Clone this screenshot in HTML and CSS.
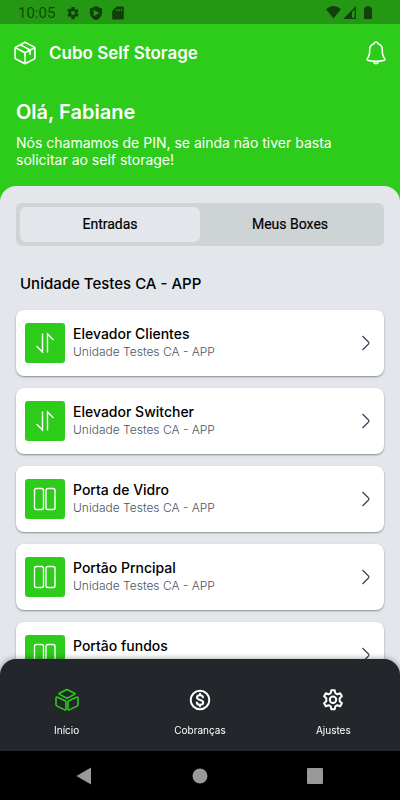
FILE: index.html
```html
<!DOCTYPE html>
<html lang="pt-BR">
<head>
  <meta charset="UTF-8" />
  <meta name="viewport" content="width=device-width, initial-scale=1.0"/>
  <title>Cubo Self Storage</title>
  <link rel="stylesheet" href="styles.css">
</head>
<body>
  <svg class="sprite" aria-hidden="true">
    <symbol id="icon-elevator" viewBox="0 0 24 24">
      <path d="M9.500 2.500v18.500L3.500 15M14.500 21.500V3L20.500 9"/>
    </symbol>
    <symbol id="icon-door" viewBox="0 0 24 24">
      <rect x="1.500" y="1.500" width="9" height="21" rx="1.800"/>
      <rect x="13" y="1.500" width="9" height="21" rx="1.800"/>
    </symbol>
    <symbol id="icon-chevron" viewBox="0 0 10 16">
      <path d="M1.500 1l6 6q.9 1 0 2l-6 6"/>
    </symbol>
  </svg>

  <div class="status-bar">
    <span class="clock">10:05</span>
    <svg width="14" height="14" viewBox="0 0 24 24"><path fill-rule="evenodd" d="M19.400 13a7.500 7.500 0 0 0 0-2l2.300-1.800-2.200-3.900-2.800 1.100a8 8 0 0 0-1.700-1L14.600 1.500H9.400L9 4.400a8 8 0 0 0-1.700 1L4.500 4.300 2.300 8.200 4.600 11a7.500 7.500 0 0 0 0 2l-2.300 1.800 2.200 3.900 2.800-1.100a8 8 0 0 0 1.700 1l.4 3.900h5.200l.4-3.900a8 8 0 0 0 1.700-1l2.800 1.100 2.200-3.900zM12 15.500a3.500 3.500 0 1 1 0-7 3.500 3.500 0 0 1 0 7z"/></svg>
    <svg width="14" height="14" viewBox="0 0 24 24"><path fill-rule="evenodd" d="M12 0L1.500 4.500V11c0 6 4.500 11.500 10.500 13 6-1.500 10.500-7 10.500-13V4.500zM8 6.500l9.500 5.500L8 17.500z"/></svg>
    <svg width="12" height="14" viewBox="0 0 20 24"><path fill-rule="evenodd" d="M7.500 1H18q2 0 2 2v18q0 2-2 2H2q-2 0-2-2V8.500zM7 5v4h2V5zm4 0v4h2V5zm4 0v4h2V5z"/></svg>
    <div class="status-right">
      <svg width="15" height="13" viewBox="0 0 15 13"><path d="M0 3.200Q7.500-3 15 3.200L7.500 12.500z"/></svg>
      <svg width="13" height="13" viewBox="0 0 13 13"><path fill-rule="evenodd" d="M0 13L13 0v13zM9 6v5.800h2.600V3.200z"/></svg>
      <svg class="battery" width="8" height="13" viewBox="0 0 8 13"><path d="M2.500 0h3v1.300H7q1 0 1 1V12q0 1-1 1H1q-1 0-1-1V2.300q0-1 1-1h1.500z"/></svg>
    </div>
  </div>

  <header>
    <div class="app-bar">
      <svg class="line-icon" width="24" height="24" viewBox="0 0 24 24"><path d="M12 1.300l9.200 4.800q.7.400.7 1.200v9.500q0 .8-.7 1.200L12 22.800 2.800 18q-.7-.4-.7-1.200V7.300q0-.8.7-1.200zM2.400 6.700L12 11.700l9.600-5M12 11.700v11M7.300 3.800l9.700 5.100v4.300"/></svg>
      <h1>Cubo Self Storage</h1>
      <button class="bell" aria-label="Notificações">
        <svg class="line-icon" width="20" height="24" viewBox="0 0 20 24"><path d="M7.800 2.800Q8 1 10 1t2.200 1.800C15 3.800 16.300 6 16.300 9c0 5 .5 6.500 2.200 8.200.8.900.3 2.300-1 2.300-4 .9-11 .9-15 0-1.300 0-1.800-1.400-1-2.300C3.200 15.500 3.700 14 3.700 9c0-3 1.300-5.200 4.100-6.200zM7.200 20.500q1 2.300 2.800 2.300t2.800-2.300"/></svg>
      </button>
    </div>
    <div class="greeting">
      <h2>Olá, Fabiane</h2>
      <p>Nós chamamos de PIN, se ainda não tiver basta solicitar ao self storage!</p>
    </div>
  </header>

  <main>
    <div class="tabs">
      <button class="tab active">Entradas</button>
      <button class="tab">Meus Boxes</button>
    </div>

    <h3>Unidade Testes CA - APP</h3>

    <div class="entries">
      <button class="entry">
        <span class="entry-icon"><svg><use href="#icon-elevator"/></svg></span>
        <span class="entry-text"><strong>Elevador Clientes</strong><small>Unidade Testes CA - APP</small></span>
        <svg class="chevron"><use href="#icon-chevron"/></svg>
      </button>
      <button class="entry">
        <span class="entry-icon"><svg><use href="#icon-elevator"/></svg></span>
        <span class="entry-text"><strong>Elevador Switcher</strong><small>Unidade Testes CA - APP</small></span>
        <svg class="chevron"><use href="#icon-chevron"/></svg>
      </button>
      <button class="entry">
        <span class="entry-icon"><svg><use href="#icon-door"/></svg></span>
        <span class="entry-text"><strong>Porta de Vidro</strong><small>Unidade Testes CA - APP</small></span>
        <svg class="chevron"><use href="#icon-chevron"/></svg>
      </button>
      <button class="entry">
        <span class="entry-icon"><svg><use href="#icon-door"/></svg></span>
        <span class="entry-text"><strong>Portão Prncipal</strong><small>Unidade Testes CA - APP</small></span>
        <svg class="chevron"><use href="#icon-chevron"/></svg>
      </button>
      <button class="entry">
        <span class="entry-icon"><svg><use href="#icon-door"/></svg></span>
        <span class="entry-text"><strong>Portão fundos</strong><small>Unidade Testes CA - APP</small></span>
        <svg class="chevron"><use href="#icon-chevron"/></svg>
      </button>
    </div>
  </main>

  <nav class="bottom-nav">
    <a href="#inicio" class="active">
      <svg class="line-icon" width="24" height="24" viewBox="0 0 24 24"><path d="M12 1.500l7.500 3.700q1 .6 0 1.200L12 10.200 4.500 6.400q-1-.6 0-1.200zM2.500 9.200l7.700 3.500q.8.400.8 1.200v7.200q0 1.300-1.200.8l-7.300-3.500Q1 17.700 1 16.800v-6.700q0-1.400 1.500-.9zM21.500 9.200l-7.700 3.500q-.8.400-.8 1.200v7.200q0 1.300 1.200.8l7.300-3.500q1.500-.7 1.500-1.600v-6.700q0-1.400-1.500-.9z"/></svg>
      Início
    </a>
    <a href="#cobrancas">
      <svg class="line-icon bold" width="24" height="24" viewBox="0 0 24 24"><circle cx="12" cy="12" r="9.300"/><path d="M15 9.300C14.700 7.900 13.500 7.300 12 7.300c-1.700 0-3 .8-3 2.200 0 3.300 6.200 1.600 6.200 5 0 1.400-1.400 2.300-3.200 2.300-1.700 0-3-.8-3.200-2.300M12 5.800v1.500M12 16.800v1.500"/></svg>
      Cobranças
    </a>
    <a href="#ajustes">
      <svg class="line-icon bold" width="24" height="24" viewBox="0 0 24 24"><path d="M10.300 2.200h3.400l.6 2.900 2.100 1.200 2.800-1 1.700 3-2.200 2v2.900l2.200 2-1.700 3-2.800-1-2.100 1.200-.6 2.900h-3.400l-.6-2.900-2.100-1.200-2.800 1-1.700-3 2.200-2v-2.900l-2.200-2 1.700-3 2.800 1 2.100-1.200z"/><circle cx="12" cy="11.800" r="3.200"/></svg>
      Ajustes
    </a>
  </nav>

  <div class="system-nav">
    <button aria-label="Voltar"><svg width="16" height="18" viewBox="0 0 16 18"><path d="M15 .500v17L.500 9z"/></svg></button>
    <button aria-label="Tela inicial"><svg width="16" height="16" viewBox="0 0 16 16"><circle cx="8" cy="8" r="7.500"/></svg></button>
    <button aria-label="Recentes"><svg width="16" height="16" viewBox="0 0 16 16"><rect width="16" height="16" rx="1"/></svg></button>
  </div>
</body>
</html>
```

FILE: styles.css
```css
* {
  box-sizing: border-box;
}
body {
  margin: 0;
  height: 100vh;
  display: flex;
  flex-direction: column;
  overflow: hidden;
  font-family: Inter, sans-serif;
  background-color: #2dcb1a;
  color: #000;
}
h1, h2, h3, p {
  margin: 0;
}
button {
  font-family: inherit;
  border: none;
  padding: 0;
  background: none;
  color: inherit;
  cursor: pointer;
}
svg {
  display: block;
}
.sprite {
  display: none;
}
.line-icon {
  fill: none;
  stroke: currentColor;
  stroke-width: 1.6;
  stroke-linecap: round;
  stroke-linejoin: round;
}
.line-icon.bold {
  stroke-width: 2;
}

.status-bar {
  flex: none;
  height: 24px;
  display: flex;
  align-items: center;
  gap: 9px;
  padding: 1px 28px 0 18px;
  background-color: #249815;
  color: #11490a;
  fill: #11400a;
}
.clock {
  font-family: Roboto, sans-serif;
  font-size: 15px;
  margin-right: 2px;
}
.status-right {
  display: flex;
  gap: 2px;
  margin-left: auto;
}
.battery {
  margin-left: 6px;
}

header {
  flex: none;
  color: #fff;
}
.app-bar {
  display: flex;
  align-items: center;
  height: 58px;
  padding: 0 14px 0 13px;
}
.app-bar h1 {
  font-size: 17px;
  font-weight: 600;
  margin-left: 12px;
}
.bell {
  margin-left: auto;
}
.greeting {
  padding: 18px 16px;
}
.greeting h2 {
  font-size: 20px;
  line-height: 24px;
  font-weight: 600;
  margin-bottom: 10px;
}
.greeting p {
  font-size: 14px;
  line-height: 17px;
}

main {
  flex: 1;
  min-height: 0;
  overflow-y: auto;
  scrollbar-width: none;
  margin-bottom: -16px;
  padding: 17px 16px 32px;
  border-radius: 16px 16px 0 0;
  background-color: #e3e6eb;
}
.tabs {
  display: flex;
  padding: 4px;
  border-radius: 6px;
  background-color: #ced3d6;
}
.tab {
  flex: 1;
  height: 35px;
  padding-bottom: 2px;
  border-radius: 6px;
  font-family: Roboto, sans-serif;
  font-size: 14px;
  font-weight: 400;
  -webkit-text-stroke: 0.2px #000;
}
.tab.active {
  background-color: #e3e6eb;
}
main h3 {
  font-size: 15px;
  line-height: 20px;
  font-weight: 500;
  margin: 28px 4px 16px;
}

.entries {
  display: flex;
  flex-direction: column;
  gap: 12px;
}
.entry {
  display: flex;
  align-items: center;
  height: 66px;
  padding: 0 13px 0 9px;
  border-radius: 8px;
  background-color: #fff;
  box-shadow: 0 1px 2px rgba(0,0,0,0.4);
  text-align: left;
}
.entry-icon {
  display: flex;
  align-items: center;
  justify-content: center;
  width: 40px;
  height: 40px;
  border-radius: 3px;
  background-color: #2dcb1a;
}
.entry-icon svg {
  width: 24px;
  height: 24px;
  fill: none;
  stroke: #fff;
  stroke-width: 1.4;
}
.entry-text {
  flex: 1;
  margin-left: 8px;
}
.entry-text strong, .entry-text small {
  display: block;
  font-size: 14px;
  line-height: 18px;
  font-weight: 500;
}
.entry-text small {
  font-size: 12px;
  font-weight: 300;
  color: #4b5563;
}
.chevron {
  width: 10px;
  height: 16px;
  fill: none;
  stroke: #334155;
  stroke-width: 1.2;
}

.bottom-nav {
  flex: none;
  z-index: 1;
  display: flex;
  height: 92px;
  border-radius: 16px 16px 0 0;
  background-color: #23262b;
  box-shadow: 0 0 6px rgba(0,0,0,0.4);
}
.bottom-nav a {
  flex: 1;
  display: flex;
  flex-direction: column;
  align-items: center;
  gap: 11px;
  padding-top: 29px;
  color: #fff;
  font-size: 10px;
  line-height: 14px;
  text-decoration: none;
}
.bottom-nav .active svg {
  color: #2dcb1a;
}

.system-nav {
  flex: none;
  z-index: 1;
  display: flex;
  justify-content: space-between;
  align-items: center;
  height: 49px;
  padding: 0 77px 0 76px;
  background-color: #000;
  fill: #999;
}
```
